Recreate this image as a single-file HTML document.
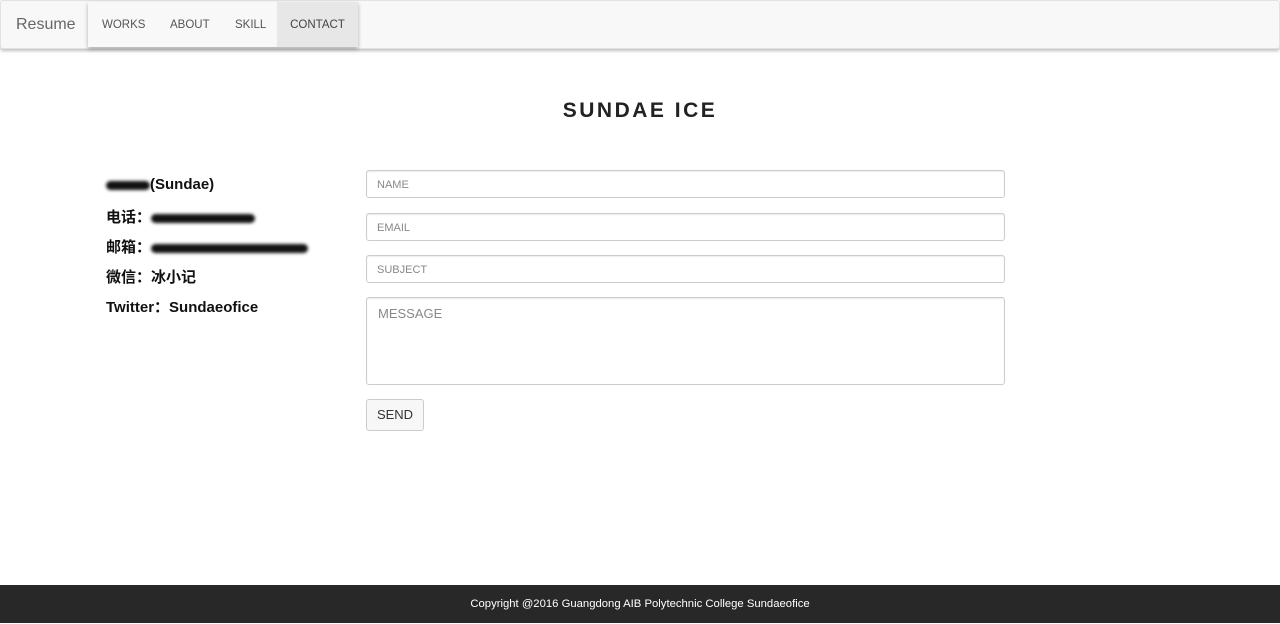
<!DOCTYPE html>
<html><head><meta charset="utf-8"><style>
*{box-sizing:border-box;margin:0;padding:0}
body{width:1280px;height:623px;position:relative;background:#fff;font-family:"Liberation Sans","Noto Sans CJK SC",sans-serif;overflow:hidden}
.nav{position:absolute;left:0;top:0;width:1280px;height:49px;background:#f8f8f8;border:1px solid #e2e2e2;box-shadow:0 2px 3px rgba(0,0,0,.25);border-radius:3px}
.brand{position:absolute;left:15px;top:15px;font-size:16px;color:#666}
.menu{position:absolute;left:87px;top:1px;width:270px;height:45px;background:#f8f8f8;box-shadow:0 2px 4px rgba(0,0,0,.3)}
.menu a{position:absolute;top:0;height:45px;line-height:46px;font-size:11.5px;color:#555;text-decoration:none}
.menu a.act{background:#e7e7e7;color:#444;text-align:center}
h1{position:absolute;top:99px;left:0;width:1280px;text-align:center;font-size:21px;letter-spacing:2.5px;color:#222;font-weight:bold}
.info{position:absolute;left:106px;font-size:15px;font-weight:bold;color:#111}
.blur{display:inline-block;background:#111;height:9px;border-radius:5px;filter:blur(1.5px);vertical-align:middle}
.in{position:absolute;left:366px;width:639px;height:28px;border:1px solid #ccc;border-radius:3px;font-size:11px;color:#888;padding:8px 10px;box-shadow:inset 0 1px 1px rgba(0,0,0,.075)}
.btn{position:absolute;left:366px;top:399px;width:58px;height:32px;border:1px solid #ccc;border-radius:3px;background:#f7f7f7;font-size:13px;color:#333;text-align:center;line-height:30px}
.foot{position:absolute;left:0;top:585px;width:1280px;height:38px;background:#282828;color:#fff;font-size:11.3px;text-align:center;line-height:39px}
</style></head><body>
<div class="nav"><div class="brand">Resume</div>
<div class="menu"><a style="left:14px">WORKS</a><a style="left:82px">ABOUT</a><a style="left:147px">SKILL</a><a class="act" style="left:189px;width:81px">CONTACT</a></div></div>
<h1>SUNDAE ICE</h1>
<div class="info" style="top:176px"><span class="blur" style="width:44px"></span>(Sundae)</div>
<div class="info" style="top:206px">电话：<span class="blur" style="width:104px"></span></div>
<div class="info" style="top:236px">邮箱：<span class="blur" style="width:157px"></span></div>
<div class="info" style="top:266px">微信：冰小记</div>
<div class="info" style="top:296px">Twitter：Sundaeofice</div>
<div class="in" style="top:170px">NAME</div>
<div class="in" style="top:213px">EMAIL</div>
<div class="in" style="top:255px">SUBJECT</div>
<div class="in" style="top:297px;height:88px;font-size:13px;padding:8px 11px">MESSAGE</div>
<div class="btn">SEND</div>
<div class="foot">Copyright @2016 Guangdong AIB Polytechnic College Sundaeofice</div>
</body></html>
